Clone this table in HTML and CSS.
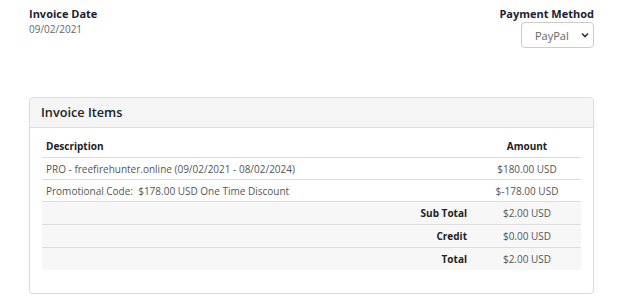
FILE: index.html
```html
<!DOCTYPE html>
<html lang="en">
<head>
  <meta charset="UTF-8">
  <meta name="viewport" content="width=device-width, initial-scale=1.0">
  <title>Invoice</title>
  <link rel="stylesheet" href="styles.css">
</head>
<body>
  <div class="invoice">
    <div class="meta">
      <div class="meta-col">
        <span class="meta-label">Invoice Date</span>
        <span class="meta-value">09/02/2021</span>
      </div>
      <div class="meta-col right">
        <span class="meta-label">Payment Method</span>
        <div class="select-wrap">
          <select class="select">
            <option>PayPal</option>
          </select>
          <svg class="chevron" width="8" height="6" viewBox="0 0 8 6"><path d="M1 1.5 L4 4.5 L7 1.5" fill="none" stroke="#333" stroke-width="1.6"/></svg>
        </div>
      </div>
    </div>

    <div class="panel">
      <div class="panel-heading">Invoice Items</div>
      <div class="panel-body">
        <table class="items">
          <thead>
            <tr>
              <th class="desc">Description</th>
              <th class="amount">Amount</th>
            </tr>
          </thead>
          <tbody>
            <tr>
              <td>PRO - freefirehunter.online (09/02/2021 - 08/02/2024)</td>
              <td class="amount">$180.00 USD</td>
            </tr>
            <tr>
              <td>Promotional Code:&nbsp; $178.00 USD One Time Discount</td>
              <td class="amount">$-178.00 USD</td>
            </tr>
            <tr class="total">
              <td class="label">Sub Total</td>
              <td class="amount">$2.00 USD</td>
            </tr>
            <tr class="total">
              <td class="label">Credit</td>
              <td class="amount">$0.00 USD</td>
            </tr>
            <tr class="total">
              <td class="label">Total</td>
              <td class="amount">$2.00 USD</td>
            </tr>
          </tbody>
        </table>
      </div>
    </div>
  </div>
</body>
</html>
```

FILE: styles.css
```css
body {
  margin: 0;
  font-family: "Open Sans", Arial, sans-serif;
  color: #555;
  background: #fff;
}
.invoice {
  padding: 6px 46px 0 29px;
}
.meta {
  display: flex;
  justify-content: space-between;
  align-items: flex-start;
}
.meta-col {
  display: flex;
  flex-direction: column;
}
.meta-col.right {
  align-items: flex-end;
}
.meta-label {
  font-size: 11px;
  font-weight: 700;
  color: #1e2233;
  line-height: 15px;
}
.meta-value {
  font-size: 10px;
  color: #666;
  line-height: 15px;
  margin-top: 1px;
}
.select-wrap {
  position: relative;
  margin-top: 1px;
}
.select {
  appearance: none;
  -webkit-appearance: none;
  width: 73px;
  height: 26px;
  padding: 0 0 0 13px;
  font-family: "Open Sans", Arial, sans-serif;
  font-size: 11px;
  color: #666;
  background: #fff;
  border: 1px solid #ccc;
  border-radius: 4px;
}
.chevron {
  position: absolute;
  right: 5px;
  top: 10px;
  pointer-events: none;
}
.panel {
  margin-top: 49px;
  border: 1px solid #ddd;
  border-radius: 4px;
  box-shadow: 0 1px 2px rgba(0, 0, 0, 0.08);
}
.panel-heading {
  height: 29px;
  line-height: 29px;
  padding: 0 11px;
  background: #f5f5f5;
  border-bottom: 1px solid #ddd;
  border-radius: 4px 4px 0 0;
  font-size: 12.7px;
  font-weight: 600;
  color: #222;
}
.panel-body {
  padding: 7px 12px 23px;
}
.items {
  width: 100%;
  border-collapse: collapse;
  font-size: 10px;
}
.items th,
.items td {
  height: 22px;
  padding: 0 4px;
  text-align: left;
  vertical-align: middle;
}
.items tbody td {
  height: 21px;
  border-top: 1px solid #ddd;
}
.items th {
  font-weight: 700;
  color: #222;
}
.items .amount {
  width: 100px;
  text-align: center;
}
.items .total td {
  height: 22px;
  background: #f7f7f7;
}
.items .total .label {
  text-align: right;
  padding-right: 6px;
  font-weight: 700;
  color: #222;
}
```
